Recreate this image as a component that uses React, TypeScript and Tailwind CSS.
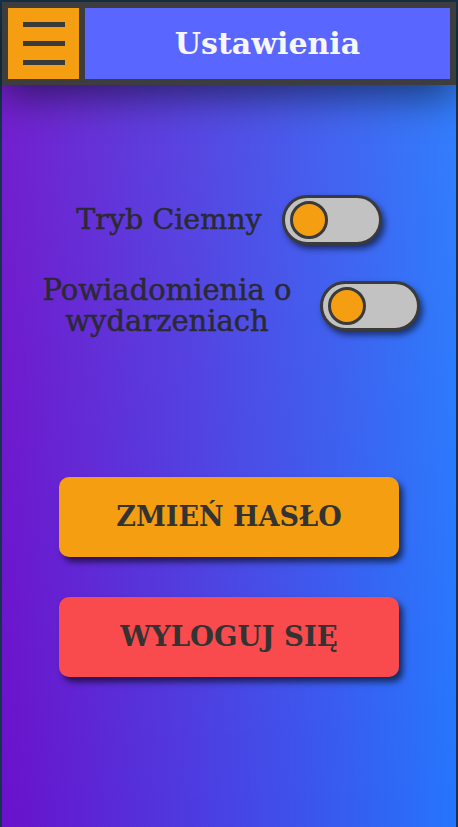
import React from "react";

const serif = { fontFamily: '"DejaVu Serif", "Liberation Serif", serif' };

function Toggle() {
  return (
    <div className="relative w-[100px] h-[50px] shrink-0 rounded-full border-[3px] border-[#3a3a3a] bg-[#c2c2c2] shadow-[3px_4px_6px_rgba(0,0,0,0.55)]">
      <div className="absolute left-[5px] top-[3px] w-[38px] h-[38px] rounded-full border-[3px] border-[#3a3a3a] bg-[#f59e12]" />
    </div>
  );
}

export default function App() {
  return (
    <div
      className="min-h-[827px] w-full border-x-2 border-t-2 border-[#17344d] bg-[linear-gradient(to_right,#6a11cb,#2575fc)] flex flex-col"
      style={serif}
    >
      <div className="relative flex-1 flex flex-col bg-[linear-gradient(to_bottom,rgba(255,255,255,0.07),rgba(255,255,255,0))]">
        <header className="relative z-10 flex gap-[6px] bg-[#3d3d3d] p-[6px] shadow-[0_10px_40px_rgba(0,0,0,0.55)]">
          <div className="w-[71px] h-[71px] bg-[#f59e12] flex flex-col items-center justify-center gap-[14px]">
            <div className="w-[42px] h-[5px] bg-[#3a3a3a]" />
            <div className="w-[42px] h-[5px] bg-[#3a3a3a]" />
            <div className="w-[42px] h-[5px] bg-[#3a3a3a]" />
          </div>
          <div className="flex-1 h-[71px] bg-[#5966ff] flex items-center justify-center">
            <h1 className="text-[30px] font-bold text-[#f7f7f7]">Ustawienia</h1>
          </div>
        </header>

        <div className="flex flex-col items-center pt-[110px]">
          <div className="flex items-center gap-[20px] h-[50px]">
            <span className="text-[28.5px] text-[#2b2932] text-center leading-[30px] [-webkit-text-stroke:0.5px_#2b2932]">Tryb Ciemny</span>
            <Toggle />
          </div>
          <div className="flex items-center gap-[28px] mt-[30px] translate-x-[2px]">
            <div className="flex flex-col items-center text-[29px] text-[#2b2932] leading-[31px] [-webkit-text-stroke:0.5px_#2b2932]">
              <span>Powiadomienia o</span>
              <span>wydarzeniach</span>
            </div>
            <Toggle />
          </div>
        </div>

        <div className="flex flex-col items-center gap-[40px] mt-[140px]">
          <button className="w-[340px] h-[80px] rounded-[10px] bg-[#f59e12] text-[#333] text-[27px] font-bold shadow-[4px_5px_6px_rgba(0,0,0,0.6)]" style={serif}>
            ZMIEŃ HASŁO
          </button>
          <button className="w-[340px] h-[80px] rounded-[10px] bg-[#f94a4d] text-[#333] text-[27.5px] font-bold shadow-[4px_5px_6px_rgba(0,0,0,0.6)]" style={serif}>
            WYLOGUJ SIĘ
          </button>
        </div>
      </div>
    </div>
  );
}
